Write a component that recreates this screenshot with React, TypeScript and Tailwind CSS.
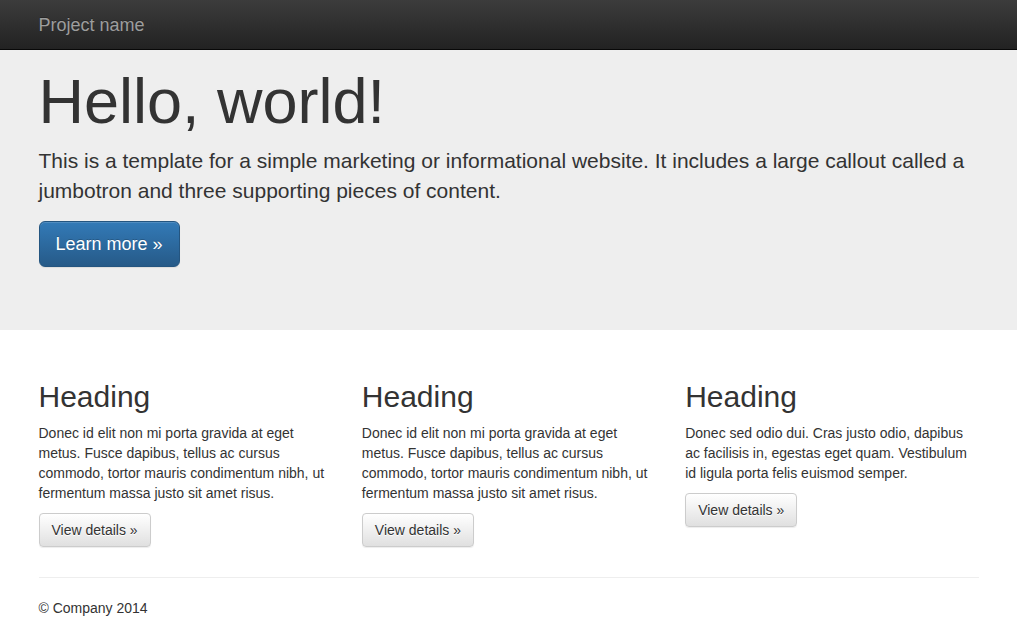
export default function App() {
  const cols = [
    {
      text: "Donec id elit non mi porta gravida at eget metus. Fusce dapibus, tellus ac cursus commodo, tortor mauris condimentum nibh, ut fermentum massa justo sit amet risus.",
    },
    {
      text: "Donec id elit non mi porta gravida at eget metus. Fusce dapibus, tellus ac cursus commodo, tortor mauris condimentum nibh, ut fermentum massa justo sit amet risus.",
    },
    {
      text: "Donec sed odio dui. Cras justo odio, dapibus ac facilisis in, egestas eget quam. Vestibulum id ligula porta felis euismod semper.",
    },
  ];
  return (
    <div className="min-h-screen bg-white font-['Liberation_Sans',Arial,sans-serif] text-[14px] leading-[20px] text-[#333]">
      <nav className="h-[50px] border-b border-[#080808] bg-[linear-gradient(to_bottom,#3c3c3c_0%,#222_100%)]">
        <div className="mx-auto w-[970px] px-[15px]">
          <a
            href="#"
            className="block w-fit py-[15px] text-[18px] leading-[20px] text-[#9d9d9d] [text-shadow:0_-1px_0_rgba(0,0,0,0.25)]"
          >
            Project name
          </a>
        </div>
      </nav>

      <div className="bg-[#eee] pt-[17px] pb-[48px]">
        <div className="mx-auto w-[970px] px-[15px]">
          <h1 className="mb-[10px] text-[63px] leading-[1.1] font-normal">Hello, world!</h1>
          <p className="mb-[15px] text-[21px] leading-[30px]">
            This is a template for a simple marketing or informational website. It includes a large callout called a
            jumbotron and three supporting pieces of content.
          </p>
          <p className="mb-[15px]">
            <a
              href="#"
              className="inline-block rounded-[6px] border border-[#245580] bg-[linear-gradient(to_bottom,#337ab7_0%,#265a88_100%)] px-[16px] py-[10px] text-[18px] leading-[24px] text-white shadow-[inset_0_1px_0_rgba(255,255,255,0.15),0_1px_1px_rgba(0,0,0,0.075)] [text-shadow:0_-1px_0_rgba(0,0,0,0.2)]"
            >
              Learn more »
            </a>
          </p>
        </div>
      </div>

      <div className="mx-auto mt-[30px] w-[970px] px-[15px]">
        <div className="-mx-[15px] flex">
          {cols.map((c, i) => (
            <div key={i} className="w-1/3 px-[15px]">
              <h2 className="mt-[20px] mb-[10px] text-[30px] leading-[1.1] font-normal">Heading</h2>
              <p className="mb-[10px]">{c.text}</p>
              <p className="mb-[10px]">
                <a
                  href="#"
                  className="inline-block rounded-[4px] border border-[#ccc] bg-[linear-gradient(to_bottom,#fff_0%,#e0e0e0_100%)] px-[12px] py-[6px] text-[14px] leading-[20px] text-[#333] shadow-[inset_0_1px_0_rgba(255,255,255,0.15),0_1px_1px_rgba(0,0,0,0.075)] [text-shadow:0_1px_0_#fff]"
                >
                  View details »
                </a>
              </p>
            </div>
          ))}
        </div>
        <hr className="my-[20px] border-0 border-t border-[#eee]" />
        <footer>
          <p>© Company 2014</p>
        </footer>
      </div>
    </div>
  );
}
